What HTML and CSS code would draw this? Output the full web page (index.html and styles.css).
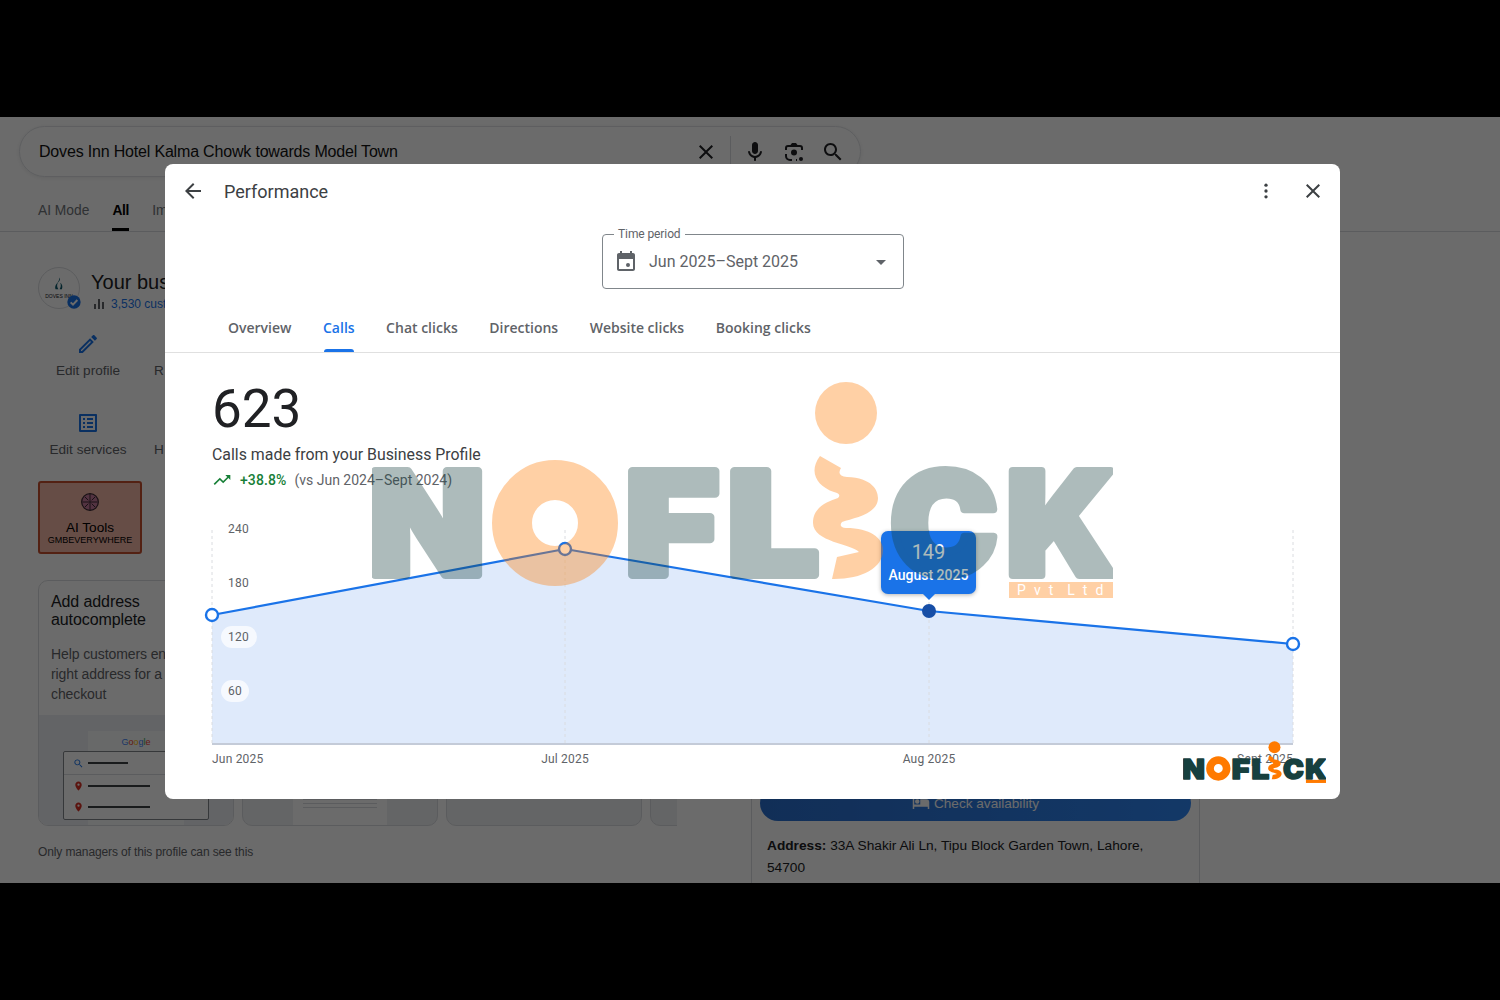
FILE: index.html
```html
<!DOCTYPE html>
<html lang="en">
<head>
    <meta charset="UTF-8">
    <meta name="viewport" content="width=device-width, initial-scale=1.0">
    <title>Performance</title>
    <link rel="stylesheet" href="styles.css">
</head>
<body>
    <div class="screen">
        <div class="search-page">
            <div class="top-bar">
                <div class="search-box">
                    <span class="search-text">Doves Inn Hotel Kalma Chowk towards Model Town</span>
                    <svg class="s-icon" viewBox="0 0 24 24"><path d="M19 6.41L17.59 5 12 10.59 6.41 5 5 6.41 10.59 12 5 17.59 6.41 19 12 13.41 17.59 19 19 17.59 13.41 12z"/></svg>
                    <span class="search-divider"></span>
                    <svg class="s-icon" viewBox="0 0 24 24"><path d="M12 14c1.66 0 3-1.34 3-3V5c0-1.66-1.34-3-3-3S9 3.34 9 5v6c0 1.66 1.34 3 3 3zm5.91-3c-.49 0-.9.36-.98.85C16.52 14.2 14.47 16 12 16s-4.52-1.8-4.93-4.15c-.08-.49-.49-.85-.98-.85-.61 0-1.09.54-1 1.14.49 3 2.89 5.35 5.91 5.78V20c0 .55.45 1 1 1s1-.45 1-1v-2.08c3.02-.43 5.42-2.78 5.91-5.78.1-.6-.39-1.14-1-1.14z"/></svg>
                    <svg class="s-icon" viewBox="0 0 24 24"><path d="M3 10V8a3 3 0 0 1 3-3h2.5l1.5-2h4l1.5 2H18a3 3 0 0 1 3 3v2h-2V8a1 1 0 0 0-1-1H6a1 1 0 0 0-1 1v2zM3 14h2v2a3 3 0 0 0 3 3h2v2H8a5 5 0 0 1-5-5zM14 19h1v2h-1z"/><circle cx="12" cy="12.5" r="3"/><circle cx="19" cy="19" r="2"/></svg>
                    <svg class="s-icon" viewBox="0 0 24 24"><path d="M15.5 14h-.79l-.28-.27C15.41 12.59 16 11.11 16 9.5 16 5.91 13.09 3 9.5 3S3 5.91 3 9.5 5.91 16 9.5 16c1.61 0 3.09-.59 4.23-1.57l.27.28v.79l5 4.99L20.49 19l-4.99-5zm-6 0C7.01 14 5 11.99 5 9.5S7.01 5 9.5 5 14 7.01 14 9.5 11.99 14 9.5 14z"/></svg>
                </div>
            </div>
            <div class="search-tabs">
                <span class="search-tab">AI Mode</span>
                <span class="search-tab active">All</span>
                <span class="search-tab">Im</span>
            </div>
            <div class="results">
                <div class="main-col">
                    <div class="biz-row">
                        <div class="biz-avatar">
                            <svg class="biz-flame" viewBox="0 0 24 24"><path d="M13 1c3 5-3 7-4 12-1 4 2 8 2 8H6c-2-6 2-9 4-12 1-2 3-4 3-8zm1 9c3 2 5 6 3 11h-4c2-3 3-7 1-11z"/></svg>
                            <span class="biz-name">DOVES INN</span>
                            <svg class="biz-verified" viewBox="0 0 24 24"><circle cx="12" cy="12" r="10"/><path class="tick" d="M7 12.5l3.5 3.5L17 9"/></svg>
                        </div>
                        <div class="biz-text">
                            <div class="biz-title">Your bus</div>
                            <div class="biz-stat">
                                <svg class="bars" viewBox="0 0 12 12"><rect x="1" y="6" width="2" height="5"/><rect x="5" y="1" width="2" height="10"/><rect x="9" y="4" width="2" height="7"/></svg>
                                <span>3,530 cust</span>
                            </div>
                        </div>
                    </div>
                    <div class="actions">
                        <div class="action">
                            <svg viewBox="0 0 24 24"><path d="M14.06 9.02l.92.92L5.92 19H5v-.92l9.06-9.06M17.66 3c-.25 0-.51.1-.7.29l-1.83 1.83 3.75 3.75 1.83-1.83c.39-.39.39-1.02 0-1.41l-2.34-2.34c-.2-.2-.45-.29-.71-.29zm-3.6 3.19L3 17.25V21h3.75L17.81 9.94l-3.75-3.75z"/></svg>
                            <span>Edit profile</span>
                        </div>
                        <div class="action side-peek">
                            <span>R</span>
                        </div>
                        <div class="action">
                            <svg viewBox="0 0 24 24"><path d="M19 5v14H5V5h14m1.1-2H3.9c-.5 0-.9.4-.9.9v16.2c0 .4.4.9.9.9h16.2c.4 0 .9-.5.9-.9V3.9c0-.5-.5-.9-.9-.9zM11 7h6v2h-6V7zm0 4h6v2h-6v-2zm0 4h6v2h-6zM7 7h2v2H7zm0 4h2v2H7zm0 4h2v2H7z"/></svg>
                            <span>Edit services</span>
                        </div>
                        <div class="action side-peek">
                            <span>H</span>
                        </div>
                    </div>
                    <div class="ai-tools">
                        <svg viewBox="0 0 24 24"><circle class="brain" cx="12" cy="12" r="10"/><path class="brain-lines" d="M12 2v20M3 12h18M6 6l4 4M18 6l-4 4M6 18l4-4M18 18l-4-4"/></svg>
                        <span class="ai-title">AI Tools</span>
                        <span class="ai-sub">GMBEVERYWHERE</span>
                    </div>
                    <div class="tip-cards">
                        <div class="tip-card">
                            <div class="tip-copy">
                                <h3>Add address<br>autocomplete</h3>
                                <p>Help customers enter the<br>right address for a faster<br>checkout</p>
                            </div>
                            <div class="tip-art">
                                <div class="mock-page">
                                    <span class="mock-google"><i class="g-blue">G</i><i class="g-red">o</i><i class="g-yellow">o</i><i class="g-blue">g</i><i class="g-green">l</i><i class="g-red">e</i></span>
                                </div>
                                <div class="mock-box">
                                    <div class="mock-row">
                                        <svg class="mock-glass" viewBox="0 0 24 24"><path d="M15.5 14h-.79l-.28-.27C15.41 12.59 16 11.11 16 9.5 16 5.91 13.09 3 9.5 3S3 5.91 3 9.5 5.91 16 9.5 16c1.61 0 3.09-.59 4.23-1.57l.27.28v.79l5 4.99L20.49 19l-4.99-5zm-6 0C7.01 14 5 11.99 5 9.5S7.01 5 9.5 5 14 7.01 14 9.5 11.99 14 9.5 14z"/></svg>
                                        <span class="mock-line short"></span>
                                    </div>
                                    <div class="mock-row">
                                        <svg class="mock-pin" viewBox="0 0 24 24"><path d="M12 2C8.13 2 5 5.13 5 9c0 5.25 7 13 7 13s7-7.75 7-13c0-3.87-3.13-7-7-7zm0 9.5a2.5 2.5 0 1 1 0-5 2.5 2.5 0 0 1 0 5z"/></svg>
                                        <span class="mock-line"></span>
                                    </div>
                                    <div class="mock-row">
                                        <svg class="mock-pin" viewBox="0 0 24 24"><path d="M12 2C8.13 2 5 5.13 5 9c0 5.25 7 13 7 13s7-7.75 7-13c0-3.87-3.13-7-7-7zm0 9.5a2.5 2.5 0 1 1 0-5 2.5 2.5 0 0 1 0 5z"/></svg>
                                        <span class="mock-line"></span>
                                    </div>
                                </div>
                            </div>
                        </div>
                        <div class="tip-card plain"><div class="tip-inner"><span></span><span></span><span></span></div></div>
                        <div class="tip-card plain"></div>
                        <div class="tip-card plain"></div>
                    </div>
                    <div class="manager-note">Only managers of this profile can see this</div>
                </div>
                <div class="side-col">
                    <div class="book-btn">
                        <svg viewBox="0 0 24 24"><path d="M7 13a3 3 0 1 0 0-6 3 3 0 0 0 0 6zm12-6h-8v7H3V5H1v15h2v-3h18v3h2v-9a4 4 0 0 0-4-4z"/></svg>
                        <span>Check availability</span>
                    </div>
                    <div class="address"><b>Address:</b> 33A Shakir Ali Ln, Tipu Block Garden Town, Lahore, 54700</div>
                </div>
            </div>
        </div>

        <div class="scrim"></div>

        <div class="modal">
            <div class="modal-head">
                <svg class="head-icon" viewBox="0 0 24 24"><path d="M20 11H7.83l5.59-5.59L12 4l-8 8 8 8 1.41-1.41L7.83 13H20v-2z"/></svg>
                <h2>Performance</h2>
                <svg class="head-icon more" viewBox="0 0 24 24"><circle cx="12" cy="5" r="2"/><circle cx="12" cy="12" r="2"/><circle cx="12" cy="19" r="2"/></svg>
                <svg class="head-icon" viewBox="0 0 24 24"><path d="M19 6.41L17.59 5 12 10.59 6.41 5 5 6.41 10.59 12 5 17.59 6.41 19 12 13.41 17.59 19 19 17.59 13.41 12z"/></svg>
            </div>

            <div class="period-wrap">
                <div class="period">
                    <span class="period-label">Time period</span>
                    <svg class="period-cal" viewBox="0 0 24 24"><path d="M16 1v2H8V1H6v2H5c-1.11 0-1.99.9-1.99 2L3 19c0 1.1.89 2 2 2h14c1.1 0 2-.9 2-2V5c0-1.1-.9-2-2-2h-1V1h-2zm3 18H5V9h14v10z"/><rect x="12" y="13" width="4" height="4" rx="2"/></svg>
                    <span class="period-value">Jun 2025&#8211;Sept 2025</span>
                    <svg class="period-arrow" viewBox="0 0 24 24"><path d="M7 10l5 5 5-5z"/></svg>
                </div>
            </div>

            <div class="tabs">
                <span class="tab">Overview</span>
                <span class="tab active">Calls</span>
                <span class="tab">Chat clicks</span>
                <span class="tab">Directions</span>
                <span class="tab">Website clicks</span>
                <span class="tab">Booking clicks</span>
            </div>

            <div class="stats">
                <div class="stat-num">623</div>
                <div class="stat-label">Calls made from your Business Profile</div>
                <div class="stat-trend">
                    <svg viewBox="0 0 24 24"><path d="M16 6l2.29 2.29-4.88 4.88-4-4L2 16.59 3.41 18l6-6 4 4 6.3-6.29L22 12V6z"/></svg>
                    <span class="trend-up">+38.8%</span>
                    <span class="trend-vs">(vs Jun 2024&#8211;Sept 2024)</span>
                </div>
            </div>

            <div class="chart">
                <svg class="chart-svg" viewBox="165 510 1175 289">
                    <path class="area" d="M212 615L565 549L929 611L1293 644V744H212Z"/>
                    <path class="grid" d="M212 530V744M565 530V744M929 530V744M1293 530V744"/>
                    <path class="axis" d="M212 744H1293"/>
                    <path class="line" d="M212 615L565 549L929 611L1293 644"/>
                    <rect class="pill" x="221" y="626" width="36" height="22" rx="11"/>
                    <rect class="pill" x="221" y="680" width="28" height="22" rx="11"/>
                    <text class="tick" x="228" y="533">240</text>
                    <text class="tick" x="228" y="587">180</text>
                    <text class="tick" x="228" y="641">120</text>
                    <text class="tick" x="228" y="695">60</text>
                    <text class="tick" x="212" y="763">Jun 2025</text>
                    <text class="tick mid" x="565" y="763">Jul 2025</text>
                    <text class="tick mid" x="929" y="763">Aug 2025</text>
                    <text class="tick end" x="1293" y="763">Sept 2025</text>
                    <circle class="pt" cx="212" cy="615" r="6"/>
                    <circle class="pt" cx="565" cy="549" r="6"/>
                    <circle class="pt" cx="1293" cy="644" r="6"/>
                    <circle class="pt-on" cx="929" cy="611" r="7"/>
                </svg>
                <div class="tooltip">
                    <div class="tooltip-num">149</div>
                    <div class="tooltip-date">August 2025</div>
                </div>
            </div>

            <svg class="watermark" viewBox="0 0 741 220">
                <g class="logo-letters">
                    <text x="-4" y="193" textLength="117" lengthAdjust="spacingAndGlyphs">N</text>
                    <text x="253" y="193" textLength="94" lengthAdjust="spacingAndGlyphs">F</text>
                    <text x="355" y="193" textLength="92" lengthAdjust="spacingAndGlyphs">L</text>
                    <text x="518" y="193" textLength="108" lengthAdjust="spacingAndGlyphs">C</text>
                    <text x="634" y="193" textLength="110" lengthAdjust="spacingAndGlyphs">K</text>
                </g>
                <circle class="logo-ring" cx="183" cy="141" r="43"/>
                <circle class="logo-orange" cx="474" cy="31" r="31"/>
                <path class="logo-orange" d="M448 74L469 86Q464 94 475 95C500 96 506 108 506 116C506 132 482 136 470 140Q466 145 474 146C498 146 511 156 511 168C511 186 490 197 462 197L460 197L465 175L487 170C480 162 441 160 441 141C441 125 455 120 466 116Q470 112 462 110C445 104 436 90 448 74Z"/>
                <rect class="logo-orange" x="637" y="200" width="104" height="16"/>
                <text class="logo-sub" x="645" y="213">P v t&#160;&#160;L t d</text>
            </svg>
            <svg class="corner-logo" viewBox="0 0 741 220">
                <g class="logo-letters">
                    <text x="-4" y="193" textLength="117" lengthAdjust="spacingAndGlyphs">N</text>
                    <text x="253" y="193" textLength="94" lengthAdjust="spacingAndGlyphs">F</text>
                    <text x="355" y="193" textLength="92" lengthAdjust="spacingAndGlyphs">L</text>
                    <text x="518" y="193" textLength="108" lengthAdjust="spacingAndGlyphs">C</text>
                    <text x="634" y="193" textLength="110" lengthAdjust="spacingAndGlyphs">K</text>
                </g>
                <circle class="logo-ring" cx="183" cy="141" r="43"/>
                <circle class="logo-orange" cx="474" cy="31" r="31"/>
                <path class="logo-orange" d="M448 74L469 86Q464 94 475 95C500 96 506 108 506 116C506 132 482 136 470 140Q466 145 474 146C498 146 511 156 511 168C511 186 490 197 462 197L460 197L465 175L487 170C480 162 441 160 441 141C441 125 455 120 466 116Q470 112 462 110C445 104 436 90 448 74Z"/>
                <rect class="logo-orange" x="637" y="200" width="104" height="16"/>
            </svg>
        </div>
    </div>
</body>
</html>
```

FILE: styles.css
```css
:root {
    --blue: #1a73e8;
    --grey-text: #5f6368;
    --dark-text: #202124;
    --logo-dark: #17403f;
    --logo-orange: #ff7a00;
}

* {
    box-sizing: border-box;
}

html, body {
    margin: 0;
    height: 1000px;
    overflow: hidden;
    background: #000;
}

body {
    padding-top: 117px;
    font-family: "Liberation Sans", Arial, sans-serif;
}

svg {
    flex: none;
}

.screen {
    position: relative;
    height: 766px;
    overflow: hidden;
    background: #fff;
}

.scrim {
    position: absolute;
    inset: 0;
    background: rgba(0,0,0,0.58);
}

/* page behind the dialog */
.search-page {
    display: flex;
    flex-direction: column;
    height: 100%;
}

.top-bar {
    padding: 9px 0 0 19px;
}

.search-box {
    display: flex;
    align-items: center;
    width: 842px;
    height: 51px;
    padding: 0 15px 0 19px;
    border: 1px solid #dfe1e5;
    border-radius: 26px;
    box-shadow: 0 1px 4px rgba(0,0,0,0.08);
}

.search-text {
    flex: 1;
    font-size: 16px;
    letter-spacing: -0.18px;
    color: #111;
}

.s-icon {
    width: 24px;
    height: 24px;
    margin-left: 15px;
    fill: #202124;
}

.search-divider {
    width: 1px;
    height: 32px;
    margin-left: 12px;
    margin-right: -3px;
    background: #dadce0;
}

.search-tabs {
    display: flex;
    gap: 23px;
    height: 55px;
    padding: 26px 0 0 38px;
    border-bottom: 1px solid #dadce0;
    font-size: 13.8px;
    color: #70757a;
}

.search-tab {
    position: relative;
}

.search-tab.active {
    color: #000;
    font-weight: bold;
    letter-spacing: -0.3px;
}

.search-tab.active::after {
    content: "";
    position: absolute;
    left: 0;
    right: 0;
    bottom: 0;
    height: 3px;
    background: #000;
}

.results {
    flex: 1;
    display: flex;
    min-height: 0;
}

.main-col {
    width: 751px;
    padding: 35px 0 0 38px;
}

.biz-row {
    display: flex;
    gap: 11px;
    height: 42px;
}

.biz-avatar {
    position: relative;
    display: flex;
    flex-direction: column;
    align-items: center;
    justify-content: center;
    width: 42px;
    height: 42px;
    border: 1px solid #dadce0;
    border-radius: 50%;
}

.biz-flame {
    width: 14px;
    height: 16px;
    fill: #0f5a6b;
}

.biz-name {
    font-size: 5px;
    line-height: 8px;
    white-space: nowrap;
    color: #202124;
}

.biz-verified {
    position: absolute;
    right: -3px;
    bottom: -2px;
    width: 16px;
    height: 16px;
    fill: var(--blue);
}

.biz-verified .tick {
    fill: none;
    stroke: #fff;
    stroke-width: 3;
}

.biz-title {
    margin-top: 3px;
    font-size: 20px;
    line-height: 24px;
    white-space: nowrap;
    color: #202124;
}

.biz-stat {
    display: flex;
    align-items: center;
    gap: 6px;
    margin-top: 3px;
    margin-left: 2px;
    font-size: 12px;
    white-space: nowrap;
    color: var(--blue);
}

.bars {
    width: 12px;
    height: 12px;
    fill: #5f6368;
}

.actions {
    display: grid;
    grid-template-columns: 100px 30px;
    column-gap: 16px;
    row-gap: 32px;
    margin-top: 23px;
}

.action {
    display: flex;
    flex-direction: column;
    align-items: center;
    gap: 7px;
    height: 47px;
    font-size: 13.6px;
    line-height: 16px;
    white-space: nowrap;
    color: #5f6368;
}

.action.side-peek {
    justify-content: flex-end;
    align-items: flex-start;
}

.action svg {
    width: 24px;
    height: 24px;
    fill: var(--blue);
}

.ai-tools {
    display: flex;
    flex-direction: column;
    align-items: center;
    width: 104px;
    height: 73px;
    margin-top: 23px;
    padding-top: 9px;
    border: 2px solid #c7502f;
    border-radius: 3px;
    background: #f3b7a6;
    color: #000;
}

.ai-tools svg {
    width: 20px;
    height: 20px;
}

.brain {
    fill: #c77a9c;
    stroke: #3c2a33;
    stroke-width: 1.5;
}

.brain-lines {
    fill: none;
    stroke: #3c2a33;
    stroke-width: 1.2;
}

.ai-title {
    margin-top: 9px;
    font-size: 13.6px;
    line-height: 14px;
}

.ai-sub {
    font-size: 9px;
    line-height: 11px;
}

.tip-cards {
    display: flex;
    gap: 8px;
    width: 639px;
    height: 246px;
    margin-top: 26px;
    overflow: hidden;
}

.tip-card {
    flex: 0 0 196px;
    display: flex;
    flex-direction: column;
    border: 1px solid #dadce0;
    border-radius: 10px;
    overflow: hidden;
}

.tip-card.plain {
    justify-content: flex-end;
    background: #eef0f3;
}

.tip-inner {
    display: flex;
    flex-direction: column;
    gap: 3px;
    height: 40px;
    margin: 0 50px;
    padding: 14px 10px 0;
    background: #fff;
}

.tip-inner span {
    height: 1px;
    background: #dadce0;
}

.tip-copy {
    height: 134px;
    padding: 12px 12px 0;
}

.tip-copy h3 {
    margin: 0;
    font-size: 16px;
    font-weight: normal;
    line-height: 18px;
    letter-spacing: -0.1px;
    color: #202124;
}

.tip-copy p {
    margin: 15px 0 0;
    font-size: 14px;
    line-height: 20px;
    letter-spacing: -0.1px;
    white-space: nowrap;
    color: #5f6368;
}

.tip-art {
    position: relative;
    flex: 1;
    padding: 36px 24px 0;
    background: #eceef2;
}

.mock-page {
    position: absolute;
    top: 16px;
    left: 49px;
    bottom: 0;
    width: 96px;
    background: #f8f9fa;
    text-align: center;
}

.mock-google {
    font-size: 9px;
}

.mock-google i {
    font-style: normal;
}

.g-blue {
    color: #4285f4;
}

.g-red {
    color: #ea4335;
}

.g-yellow {
    color: #fbbc05;
}

.g-green {
    color: #34a853;
}

.mock-box {
    position: relative;
    height: 69px;
    border: 1px solid #80868b;
    border-radius: 2px;
    background: #fff;
}

.mock-row {
    display: flex;
    align-items: center;
    gap: 4px;
    height: 22px;
    padding-left: 9px;
}

.mock-row + .mock-row {
    border-top: 1px solid #dadce0;
}

.mock-row + .mock-row + .mock-row {
    border-top: 0;
}

.mock-glass {
    width: 11px;
    height: 11px;
    fill: var(--blue);
}

.mock-pin {
    width: 11px;
    height: 12px;
    fill: #d93025;
}

.mock-line {
    width: 62px;
    height: 2px;
    background: #3c4043;
}

.mock-line.short {
    width: 40px;
}

.manager-note {
    margin-top: 19px;
    font-size: 12px;
    letter-spacing: -0.12px;
    color: #5f6368;
}

.side-col {
    display: flex;
    flex-direction: column;
    justify-content: flex-end;
    width: 449px;
    border-left: 1px solid #dadce0;
    border-right: 1px solid #dadce0;
    padding: 0 8px 4px 8px;
}

.book-btn {
    display: flex;
    align-items: center;
    justify-content: center;
    gap: 4px;
    height: 36px;
    border-radius: 18px;
    background: linear-gradient(90deg, #2a6fcf, #2f86f5);
    font-size: 13.6px;
    color: #fff;
}

.book-btn svg {
    width: 18px;
    height: 18px;
    fill: #fff;
}

.address {
    margin-top: 14px;
    padding: 0 7px;
    font-size: 13.7px;
    line-height: 22px;
    color: #202124;
}

/* dialog */
.modal {
    position: absolute;
    top: 47px;
    left: 165px;
    width: 1175px;
    height: 635px;
    border-radius: 8px;
    background: #fff;
    overflow: hidden;
    font-family: Roboto, sans-serif;
}

.modal-head {
    display: flex;
    align-items: center;
    height: 54px;
    padding: 0 15px 0 16px;
}

.modal-head h2 {
    flex: 1;
    margin: 0 0 0 19px;
    font-size: 18px;
    font-weight: 400;
    color: #3c4043;
}

.head-icon {
    width: 24px;
    height: 24px;
    fill: #3c4043;
}

.head-icon.more {
    margin-right: 23px;
    transform: scale(0.83);
}

.period-wrap {
    display: flex;
    justify-content: flex-start;
    padding: 16px 0 0 437px;
}

.period {
    position: relative;
    display: flex;
    align-items: center;
    width: 302px;
    height: 55px;
    padding: 0 16px 0 11px;
    border: 1px solid #80868b;
    border-radius: 4px;
}

.period-label {
    position: absolute;
    top: -8px;
    left: 11px;
    padding: 0 4px;
    background: #fff;
    font-size: 12px;
    line-height: 14px;
    letter-spacing: -0.1px;
    color: var(--grey-text);
}

.period-cal {
    width: 24px;
    height: 24px;
    fill: var(--grey-text);
}

.period-value {
    flex: 1;
    margin-left: 11px;
    font-size: 16px;
    color: var(--grey-text);
}

.period-arrow {
    width: 24px;
    height: 24px;
    margin-right: -6px;
    fill: var(--grey-text);
}

.tabs {
    display: flex;
    gap: 31.5px;
    height: 64px;
    padding: 29px 0 0 63px;
    border-bottom: 1px solid #e0e0e0;
    font-family: "Open Sans", sans-serif;
    font-size: 14px;
    font-weight: 600;
    line-height: 20px;
    color: var(--grey-text);
}

.tab {
    position: relative;
    height: 34px;
}

.tab.active {
    color: var(--blue);
}

.tab.active::after {
    content: "";
    position: absolute;
    left: 1px;
    right: 1px;
    bottom: 0;
    height: 3px;
    border-radius: 3px 3px 0 0;
    background: var(--blue);
}

.stats {
    padding: 26px 0 0 47px;
}

.stat-num {
    font-size: 53px;
    line-height: 60px;
    color: #202124;
}

.stat-label {
    margin-top: 4px;
    font-size: 15.9px;
    line-height: 24px;
    color: #3c4043;
}

.stat-trend {
    display: flex;
    align-items: center;
    height: 20px;
    margin-top: 3px;
    font-size: 14px;
}

.stat-trend svg {
    width: 20px;
    height: 20px;
    fill: #188038;
}

.trend-up {
    margin-left: 8px;
    font-weight: 500;
    letter-spacing: 0.1px;
    color: #188038;
}

.trend-vs {
    margin-left: 8px;
    color: var(--grey-text);
}

.chart {
    position: relative;
    margin-top: 20px;
}

.chart-svg {
    display: block;
    width: 1175px;
    height: 289px;
}

.area {
    fill: #dfeafb;
}

.grid {
    fill: none;
    stroke: #dadce0;
    stroke-dasharray: 3 3;
}

.axis {
    fill: none;
    stroke: #c4cbd8;
    stroke-width: 2;
}

.line {
    fill: none;
    stroke: var(--blue);
    stroke-width: 2.2;
}

.pill {
    fill: #f6f9fe;
}

.tick {
    font-size: 12px;
    letter-spacing: 0.2px;
    fill: var(--grey-text);
}

.tick.mid {
    text-anchor: middle;
}

.tick.end {
    text-anchor: end;
}

.pt {
    fill: #fff;
    stroke: var(--blue);
    stroke-width: 2.4;
}

.pt-on {
    fill: #174ea6;
}

.tooltip {
    position: absolute;
    top: 21px;
    left: 716px;
    width: 95px;
    height: 63px;
    padding-top: 9px;
    border-radius: 7px;
    background: var(--blue);
    box-shadow: 0 1px 4px rgba(0,0,0,0.3);
    text-align: center;
    color: #fff;
}

.tooltip::after {
    content: "";
    position: absolute;
    left: 42px;
    bottom: -6px;
    border-left: 6px solid transparent;
    border-right: 6px solid transparent;
    border-top: 6px solid var(--blue);
}

.tooltip-num {
    font-size: 20px;
    line-height: 24px;
}

.tooltip-date {
    font-size: 14px;
    font-weight: 500;
    line-height: 22px;
}

/* logo: watermark and small corner copy */
.watermark {
    position: absolute;
    top: 218px;
    left: 207px;
    width: 741px;
    height: 220px;
    opacity: 0.35;
}

.corner-logo {
    position: absolute;
    top: 577px;
    left: 1018px;
    width: 143px;
    height: 43px;
}

.logo-letters {
    font-family: Inter, sans-serif;
    font-size: 143px;
    font-weight: 900;
    fill: var(--logo-dark);
    stroke: var(--logo-dark);
    stroke-width: 8;
    stroke-linejoin: round;
}

.logo-ring {
    fill: none;
    stroke: var(--logo-orange);
    stroke-width: 40;
}

.logo-orange {
    fill: var(--logo-orange);
}

.logo-sub {
    font-family: Roboto, sans-serif;
    font-size: 14px;
    letter-spacing: 2.3px;
    fill: #fff;
}
```
